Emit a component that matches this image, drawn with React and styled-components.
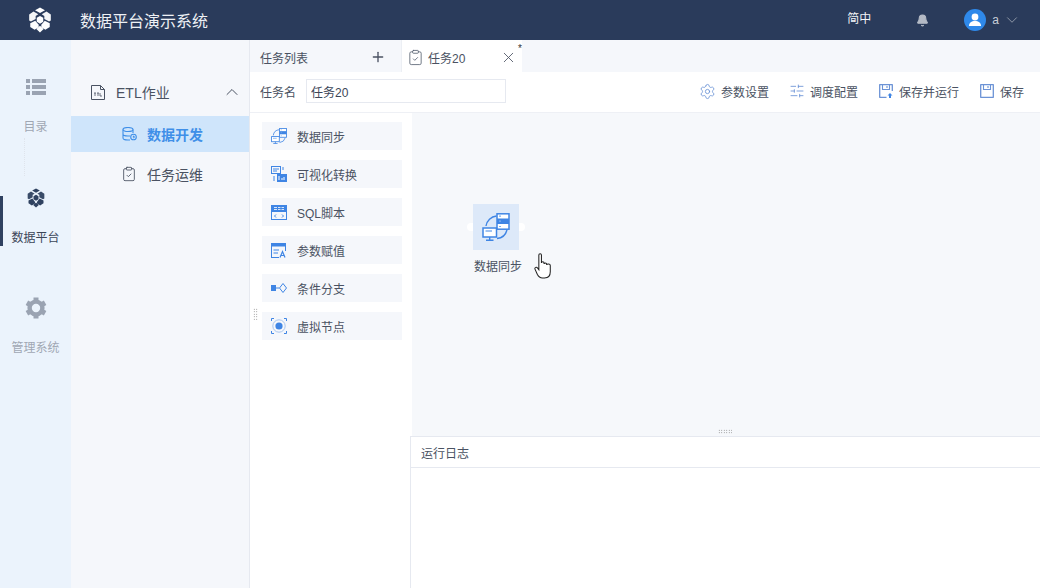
import React from 'react';
import styled, { createGlobalStyle } from 'styled-components';
import { Bell, ChevronDown, ChevronUp, Plus, X, Settings, SlidersHorizontal, ClipboardCheck } from 'lucide-react';

const GlobalStyle = createGlobalStyle`
    html, body {
        margin: 0;
        padding: 0;
        width: 1040px;
        height: 588px;
        overflow: hidden;
        background: #fff;
        font-family: "Liberation Sans", "Noto Sans CJK SC", sans-serif;
    }
    * {
        box-sizing: border-box;
    }
`;

//#region styled-components
const Page = styled.div`
    display: flex;
    flex-direction: column;
    width: 1040px;
    height: 588px;
`;

const Header = styled.header`
    display: flex;
    align-items: center;
    flex: 0 0 40px;
    padding-left: 27px;
    background-color: #2a3b5b;
    color: #fff;
`;
const Title = styled.div`
    margin-left: 27px;
    font-size: 16px;
    color: #eef1f5;
`;
const HeaderRight = styled.div`
    display: flex;
    align-items: center;
    margin-left: auto;
    padding-right: 19px;
`;
const Lang = styled.div`
    margin-right: 45px;
    margin-top: -6px;
    font-size: 12px;
    color: #f2f4f7;
`;
const Avatar = styled.div`
    display: flex;
    align-items: center;
    justify-content: center;
    width: 22px;
    height: 22px;
    margin-left: 35px;
    border-radius: 50%;
    background-color: #2f89ea;
`;
const UserName = styled.span`
    margin: 0 4px 0 6px;
    font-size: 12px;
    color: #c9ced8;
`;

const Body = styled.div`
    display: flex;
    flex: 1;
    min-height: 0;
`;

const Rail = styled.nav`
    display: flex;
    flex-direction: column;
    flex: 0 0 71px;
    padding-top: 31px;
    background-color: #ebf3fc;
`;
const RailItem = styled.div`
    display: flex;
    flex-direction: column;
    align-items: center;
    height: 110.5px;
    padding-top: 3px;
    position: relative;
    color: ${(props) => (props.$active ? '#3c4658' : '#a0a7b3')};
    font-size: 12px;
    &::before {
        content: '';
        display: ${(props) => (props.$active ? 'block' : 'none')};
        position: absolute;
        left: 0;
        top: 14px;
        width: 3px;
        height: 50px;
        background-color: #2f4160;
    }
    &::after {
        content: '';
        display: ${(props) => (props.$divider ? 'block' : 'none')};
        position: absolute;
        left: 24px;
        top: 67px;
        height: 38px;
        border-left: 1px dotted #dfe4ec;
    }
`;
const RailIcon = styled.div`
    display: flex;
    align-items: center;
    justify-content: center;
    width: 22px;
    height: 26px;
`;
const RailLabel = styled.div`
    margin-top: 19px;
    line-height: 16px;
`;

const Menu = styled.aside`
    flex: 0 0 179px;
    padding-top: 32px;
    background-color: #f5f7fb;
    border-right: 1px solid #e6e9f0;
`;
const MenuGroup = styled.div`
    display: flex;
    align-items: center;
    height: 40px;
    margin-bottom: 4px;
    padding: 0 7px 0 20px;
    font-size: 14px;
    color: #4a5262;
`;
const MenuGroupLabel = styled.span`
    flex: 1;
    margin-left: 11px;
`;
const MenuItem = styled.div`
    display: flex;
    align-items: center;
    height: 36px;
    margin-bottom: 4px;
    padding-left: 50px;
    font-size: 14px;
    font-weight: ${(props) => (props.$active ? 700 : 400)};
    color: ${(props) => (props.$active ? '#3f8fe8' : '#4a5262')};
    background-color: ${(props) => (props.$active ? '#cfe5fb' : 'transparent')};
`;
const MenuItemIcon = styled.span`
    display: flex;
    justify-content: center;
    width: 16px;
`;
const MenuItemLabel = styled.span`
    margin-left: 10px;
`;

const Main = styled.main`
    display: flex;
    flex-direction: column;
    flex: 1;
    min-width: 0;
`;

const Tabs = styled.div`
    display: flex;
    flex: 0 0 32px;
    background-color: #f5f7fb;
`;
const ListTab = styled.div`
    display: flex;
    align-items: center;
    justify-content: space-between;
    width: 151px;
    padding: 2px 15px 0 10px;
    font-size: 12px;
    color: #4a5262;
`;
const OpenTab = styled.div`
    display: flex;
    align-items: center;
    width: 121px;
    padding: 2px 0 0 5px;
    position: relative;
    background-color: #fff;
    border-left: 1px solid #eceff4;
    font-size: 12px;
    color: #4a5262;
`;
const TabLabel = styled.span`
    flex: 1;
    margin-left: 4px;
`;
const CloseIcon = styled(X)`
    margin-right: 5px;
`;
const Dirty = styled.span`
    position: absolute;
    top: 4px;
    right: 0;
    font-size: 10px;
    line-height: 10px;
    color: #333;
`;

const Toolbar = styled.div`
    display: flex;
    align-items: center;
    flex: 0 0 41px;
    padding: 0 16px 2px 10px;
    background-color: #fff;
    border-bottom: 1px solid #eef0f5;
    font-size: 12px;
    color: #4a5262;
`;
const NameInput = styled.input`
    width: 200px;
    height: 24px;
    margin-left: 10px;
    padding: 0 4px;
    border: 1px solid #e6e9f0;
    background: #fff;
    font: inherit;
    color: #3c4658;
    outline: none;
`;
const Actions = styled.div`
    display: flex;
    align-items: center;
    gap: 21px;
    margin-left: auto;
`;
const Action = styled.div`
    display: flex;
    align-items: center;
    gap: 6px;
`;
const GearAction = styled(Settings)`
    margin: 0 -1px;
`;
const SliderAction = styled(SlidersHorizontal)`
    margin: 0 -1px;
`;

const Workspace = styled.div`
    display: flex;
    flex: 1;
    min-height: 0;
`;
const Palette = styled.div`
    display: flex;
    flex-direction: column;
    gap: 10px;
    flex: 0 0 160px;
    padding: 9px 8px 0 12px;
    position: relative;
    background-color: #fff;
`;
const PaletteItem = styled.div`
    display: flex;
    align-items: center;
    gap: 10px;
    height: 28px;
    padding-left: 9px;
    background-color: #f5f7fb;
    font-size: 12px;
    color: #4a5262;
`;
const Grip = styled.div`
    position: absolute;
    left: 3px;
    top: 195px;
    width: 5px;
    height: 12px;
    background-image: radial-gradient(#777 0.7px, transparent 0.8px);
    background-size: 2.5px 2.5px;
`;

const Right = styled.div`
    display: flex;
    flex-direction: column;
    flex: 1;
    min-width: 0;
`;
const Canvas = styled.div`
    flex: 1;
    position: relative;
    background-color: #f6f8fb;
    border-left: 2px solid #fff;
`;
const Node = styled.div`
    position: absolute;
    left: 61px;
    top: 91px;
    display: flex;
    flex-direction: column;
    align-items: center;
    width: 46px;
`;
const NodeBox = styled.div`
    display: flex;
    align-items: center;
    justify-content: center;
    position: relative;
    width: 46px;
    height: 46px;
    background-color: #dde9f9;
`;
const Anchor = styled.span`
    position: absolute;
    top: 19px;
    ${(props) => (props.$right ? 'right: -6px;' : 'left: -6px;')}
    width: 6px;
    height: 8px;
    background-color: #fff;
    border-radius: ${(props) => (props.$right ? '0 4px 4px 0' : '4px 0 0 4px')};
`;
const NodeLabel = styled.div`
    margin: 10px 0 0 4px;
    white-space: nowrap;
    font-size: 12px;
    line-height: 14px;
    color: #4a5262;
`;
const Cursor = styled.div`
    position: absolute;
    left: 122px;
    top: 140px;
`;
const HGrip = styled.div`
    position: absolute;
    left: 306px;
    bottom: 2px;
    width: 14px;
    height: 5px;
    background-image: radial-gradient(#777 0.7px, transparent 0.8px);
    background-size: 2.5px 2.5px;
`;
const LogPanel = styled.section`
    flex: 0 0 152px;
    background-color: #fff;
    border-top: 1px solid #e6e9f0;
    border-left: 1px solid #e6e9f0;
`;
const LogHeader = styled.div`
    display: flex;
    align-items: center;
    height: 31px;
    padding-left: 10px;
    border-bottom: 1px solid #e6e9f0;
    font-size: 12px;
    color: #4a5262;
`;
//#endregion

const CubeLogo = ({ size = 24, color = '#fff' }) => (
    <svg width={size} height={size} viewBox="0 0 24 24" fill={color}>
        <path d="M12 0.5 16.6 3 12 5.6 7.4 3Z" />
        <path d="M6 4.2 10.4 6.8 8 8.2 8 11 3.6 13.4 2 12.5 2 7Z" opacity="0.95" />
        <path d="M18 4.2 22 7 22 12.5 20.4 13.4 16 11 16 8.2 13.6 6.8Z" opacity="0.95" />
        <path d="M12 8.2 15 10 15 13.6 12 15.4 9 13.6 9 10Z" />
        <path d="M3 15 7.6 12.6 10.8 16.4 10.8 18.6 7 21 3 18.4Z" />
        <path d="M21 15 16.4 12.6 13.2 16.4 13.2 18.6 17 21 21 18.4Z" />
        <path d="M12 17.4 15.4 20.4 12 23.5 8.6 20.4Z" />
    </svg>
);

const ListIcon = () => (
    <svg width="20" height="16" viewBox="0 0 20 16" fill="#9aa3b2">
        <rect x="0" y="0" width="4" height="4" />
        <rect x="6" y="0" width="14" height="4" />
        <rect x="0" y="6" width="4" height="4" />
        <rect x="6" y="6" width="14" height="4" />
        <rect x="0" y="12" width="4" height="4" />
        <rect x="6" y="12" width="14" height="4" />
    </svg>
);

const GearIcon = () => (
    <svg width="22" height="22" viewBox="0 0 22 22">
        <circle cx="11" cy="11" r="6.4" fill="none" stroke="#9aa3b2" strokeWidth="4.4" />
        <g fill="#9aa3b2">
            <rect x="8.5" y="0.5" width="5" height="4" />
            <rect x="8.5" y="17.5" width="5" height="4" />
            <rect x="8.5" y="0.5" width="5" height="4" transform="rotate(60 11 11)" />
            <rect x="8.5" y="0.5" width="5" height="4" transform="rotate(120 11 11)" />
            <rect x="8.5" y="0.5" width="5" height="4" transform="rotate(240 11 11)" />
            <rect x="8.5" y="0.5" width="5" height="4" transform="rotate(300 11 11)" />
        </g>
    </svg>
);

const EtlIcon = () => (
    <svg width="14" height="15" viewBox="0 0 14 15" fill="none" stroke="#4a5262" strokeWidth="1">
        <path d="M1 .5H9.5L13.5 4.5V14.5H.5V.5Z" />
        <path d="M9.5 .5V4.5H13.5" />
        <path d="M3 8H5M4 8V11M6 8H8M7 8V11M9 8V11H11" strokeWidth="0.8" />
    </svg>
);

const DataDevIcon = () => (
    <svg width="15" height="14" viewBox="0 0 15 14" fill="none" stroke="#3f8fe8" strokeWidth="1.1">
        <ellipse cx="6" cy="2.5" rx="5" ry="2" />
        <path d="M1 2.5V11C1 12.2 3.2 13 6 13H8M11 2.5V6M1 7C1 8.2 3.2 9 6 9H8" />
        <circle cx="11.5" cy="10" r="2.8" />
        <path d="M11 9 12.3 10 11 11" />
    </svg>
);

const SyncIcon = ({ size = 18 }) => (
    <svg width={size} height={size} viewBox="0 0 28 28" fill="none">
        <path d="M4 13A11.5 11.5 0 0 1 14.5 3" stroke="#3f85e4" strokeWidth="1.4" />
        <path d="M25 17A11.5 11.5 0 0 1 15 25.5" stroke="#3f85e4" strokeWidth="1.4" />
        <rect x="15" y="0.8" width="12" height="15.4" fill="#fff" stroke="#3f85e4" strokeWidth="1.5" />
        <rect x="15" y="5.5" width="12" height="5.5" fill="#3f85e4" />
        <path d="M17 3.2H19M17 8.2H19M17 13.5H19" stroke="#7fb0ee" strokeWidth="1.2" />
        <rect x="1" y="15" width="13.5" height="9" fill="#fff" stroke="#3f85e4" strokeWidth="1.5" />
        <path d="M7.7 24V27M4 27.2H11.5" stroke="#3f85e4" strokeWidth="1.4" />
        <path d="M3.5 18H10" stroke="#3f85e4" />
    </svg>
);

const VisualIcon = () => (
    <svg width="16" height="16" viewBox="0 0 16 16" fill="none">
        <rect x="0.5" y="0.5" width="9" height="7" stroke="#3f85e4" />
        <path d="M2 3H8M2 5H6" stroke="#3f85e4" />
        <path d="M12 1V4M3 10V15" stroke="#3f85e4" />
        <rect x="6" y="8" width="10" height="8" fill="#3f85e4" />
        <path d="M8 10V14M11 12V14M13 11V14" stroke="#fff" />
    </svg>
);

const SqlIcon = () => (
    <svg width="16" height="15" viewBox="0 0 16 15" fill="none">
        <rect x="0.5" y="0.5" width="15" height="14" stroke="#3f85e4" />
        <rect x="0" y="0" width="16" height="7" fill="#3f85e4" />
        <path d="M3 2.5H6M7 2.5H9.5M10.5 2.5H13M3 4.5H6M7 4.5H9.5M10.5 4.5H13" stroke="#fff" strokeWidth="0.8" />
        <path d="M5 9.5 3.5 11 5 12.5M11 9.5 12.5 11 11 12.5" stroke="#3f85e4" />
    </svg>
);

const AssignIcon = () => (
    <svg width="16" height="15" viewBox="0 0 16 15" fill="none">
        <rect x="0.5" y="0.5" width="14" height="14" stroke="#3f85e4" />
        <rect x="0" y="0" width="15" height="3.5" fill="#3f85e4" />
        <path d="M2.5 7H8M2.5 10H7" stroke="#3f85e4" />
        <rect x="8" y="8" width="8" height="7" fill="#f5f7fb" />
        <path d="M9 14.5 11.5 8.5 14 14.5M10 12.5H13" stroke="#3f85e4" strokeWidth="1.2" />
    </svg>
);

const BranchIcon = () => (
    <svg width="16" height="14" viewBox="0 0 16 14" fill="none">
        <rect x="0" y="4" width="5" height="6" fill="#3f85e4" />
        <path d="M5 7H8" stroke="#3f85e4" />
        <path d="M12 2.5 15.5 7 12 11.5 8.5 7Z" stroke="#3f85e4" />
    </svg>
);

const VirtualIcon = () => (
    <svg width="16" height="16" viewBox="0 0 16 16" fill="none">
        <circle cx="8" cy="8" r="3.6" fill="#3f85e4" />
        <circle cx="8" cy="8" r="6.2" stroke="#a9c6ef" />
        <path d="M.5 3V.5H3M13 .5H15.5V3M.5 13V15.5H3M13 15.5H15.5V13" stroke="#3f85e4" />
    </svg>
);

const SaveIcon = ({ run }) => (
    <svg width="14" height="14" viewBox="0 0 14 14" fill="none" stroke="#6c93d6" strokeWidth="1.3">
        <path d={run ? 'M7.5 13.3H.7V.7H13.3V7' : 'M.7 .7H13.3V13.3H.7Z'} strokeLinejoin="round" />
        <path d="M3.5 .7V5.5H10.5V.7M8 2V4" strokeWidth="1.1" />
        {run && <path d="M8.5 11.5 11 9 13.5 11.5H12V14H10V11.5Z" fill="#3f85e4" stroke="none" />}
    </svg>
);

const HandCursor = () => (
    <svg width="18" height="26" viewBox="0 0 17 25" fill="#fff" stroke="#222" strokeWidth="1">
        <path d="M4.5 2C4.5 0.4 7 0.4 7 2V9.5C7 8 9.5 8 9.5 9.5V10.5C9.5 9.2 12 9.2 12 10.5V11.5C12 10.3 15.5 10.3 15.5 12V18C15.5 21.5 13.5 24 10 24H8C5.5 24 4 22.5 3 20.5L0.8 15.5C0.2 14 2.3 13 3.2 14.3L4.5 16Z" />
    </svg>
);

const paletteItems = [
    { label: '数据同步', icon: <SyncIcon size={16} /> },
    { label: '可视化转换', icon: <VisualIcon /> },
    { label: 'SQL脚本', icon: <SqlIcon /> },
    { label: '参数赋值', icon: <AssignIcon /> },
    { label: '条件分支', icon: <BranchIcon /> },
    { label: '虚拟节点', icon: <VirtualIcon /> },
];

const App = () => {
    return (
        <Page>
            <GlobalStyle />
            <Header>
                <CubeLogo size={26} />
                <Title>数据平台演示系统</Title>
                <HeaderRight>
                    <Lang>简中</Lang>
                    <Bell size={13} color="#b4bac5" fill="#b4bac5" />
                    <Avatar>
                        <svg width="14" height="14" viewBox="0 0 14 14" fill="#fff">
                            <circle cx="7" cy="4" r="3.4" />
                            <path d="M1 13C1 9.5 3.5 8 7 8S13 9.5 13 13Z" />
                        </svg>
                    </Avatar>
                    <UserName>a</UserName>
                    <ChevronDown size={18} color="#8f98a8" strokeWidth={1.3} />
                </HeaderRight>
            </Header>
            <Body>
                <Rail>
                    <RailItem $divider>
                        <RailIcon><ListIcon /></RailIcon>
                        <RailLabel>目录</RailLabel>
                    </RailItem>
                    <RailItem $active>
                        <RailIcon><CubeLogo size={20} color="#2f4160" /></RailIcon>
                        <RailLabel>数据平台</RailLabel>
                    </RailItem>
                    <RailItem>
                        <RailIcon><GearIcon /></RailIcon>
                        <RailLabel>管理系统</RailLabel>
                    </RailItem>
                </Rail>
                <Menu>
                    <MenuGroup>
                        <EtlIcon />
                        <MenuGroupLabel>ETL作业</MenuGroupLabel>
                        <ChevronUp size={20} color="#4a5262" strokeWidth={1.2} />
                    </MenuGroup>
                    <MenuItem $active>
                        <MenuItemIcon><DataDevIcon /></MenuItemIcon>
                        <MenuItemLabel>数据开发</MenuItemLabel>
                    </MenuItem>
                    <MenuItem>
                        <MenuItemIcon><ClipboardCheck size={16} color="#4a5262" strokeWidth={1.3} /></MenuItemIcon>
                        <MenuItemLabel>任务运维</MenuItemLabel>
                    </MenuItem>
                </Menu>
                <Main>
                    <Tabs>
                        <ListTab>
                            任务列表
                            <Plus size={16} color="#4a5262" strokeWidth={2} />
                        </ListTab>
                        <OpenTab>
                            <ClipboardCheck size={17} color="#5a6474" strokeWidth={1.2} />
                            <TabLabel>任务20</TabLabel>
                            <CloseIcon size={17} color="#4a5262" strokeWidth={1.2} />
                            <Dirty>*</Dirty>
                        </OpenTab>
                    </Tabs>
                    <Toolbar>
                        任务名
                        <NameInput defaultValue="任务20" />
                        <Actions>
                            <Action>
                                <GearAction size={17} color="#6c93d6" strokeWidth={1.2} />
                                参数设置
                            </Action>
                            <Action>
                                <SliderAction size={16} color="#6c93d6" strokeWidth={1.3} />
                                调度配置
                            </Action>
                            <Action>
                                <SaveIcon run />
                                保存并运行
                            </Action>
                            <Action>
                                <SaveIcon />
                                保存
                            </Action>
                        </Actions>
                    </Toolbar>
                    <Workspace>
                        <Palette>
                            {paletteItems.map((item) => (
                                <PaletteItem key={item.label}>
                                    {item.icon}
                                    {item.label}
                                </PaletteItem>
                            ))}
                            <Grip />
                        </Palette>
                        <Right>
                            <Canvas>
                                <Node>
                                    <NodeBox>
                                        <Anchor />
                                        <SyncIcon size={28} />
                                        <Anchor $right />
                                    </NodeBox>
                                    <NodeLabel>数据同步</NodeLabel>
                                </Node>
                                <Cursor><HandCursor /></Cursor>
                                <HGrip />
                            </Canvas>
                            <LogPanel>
                                <LogHeader>运行日志</LogHeader>
                            </LogPanel>
                        </Right>
                    </Workspace>
                </Main>
            </Body>
        </Page>
    );
};

export default App;
